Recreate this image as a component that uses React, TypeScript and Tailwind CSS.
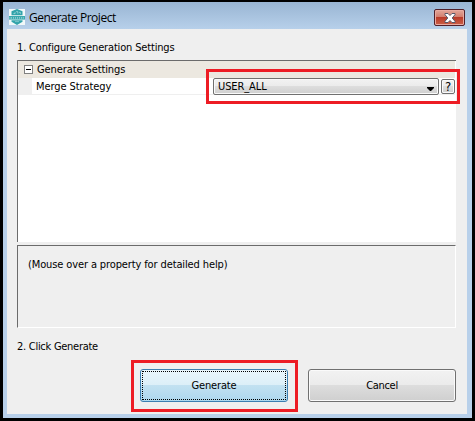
import React from "react";

const ui = "font-['DejaVu_Sans_Condensed','DejaVu_Sans',sans-serif] [font-stretch:condensed] text-[11px] leading-[16px] whitespace-nowrap text-black";

function AppIcon() {
  return (
    <svg width="16" height="16" viewBox="0 0 16 16" className="shrink-0">
      <rect width="16" height="16" fill="#f1f8f9" />
      <path d="M8 0 13.500 2.200v4H2.500v-4z" fill="#31a3aa" />
      <path d="M4.5 4.6h1.6V3.2M7.2 2.6h1.6v2M10 3.4h1.4v1.4" fill="none" stroke="#a8dadc" strokeWidth=".8" />
      <path d="M0 7h16v3.6H0z" fill="#3ba8ae" />
      <path d="M1 8v1.8M2.5 8v1.8M4.5 8v1.8M6.5 8v1.8M8.5 8v1.8M10.5 8v1.8M12.5 8v1.8M14.3 8v1.8" stroke="#a3d8da" strokeWidth=".7" />
      <path d="M2.5 11.2h11v1.600L8 16 2.500 12.800z" fill="#31a3aa" />
      <path d="M6 12.6h4" stroke="#8dced1" strokeWidth=".8" />
    </svg>
  );
}

function TitleBar() {
  return (
    <header className="flex h-[27px] items-start pl-[6px] pr-[7px] pt-[7px] bg-linear-to-b from-[#99b5d3] to-[#b7d0ea]">
      <AppIcon />
      <span className="ml-[4px] grow whitespace-nowrap font-['Open_Sans','Noto_Sans',sans-serif] text-[12px] leading-[17px] tracking-[-0.48px] text-black">
        Generate Project
      </span>
      <button className="flex h-[17px] w-[31px] items-center justify-center rounded-[2px] border border-[#51202a] bg-[linear-gradient(#e2a79a,#d27c6c_48%,#b93b29_50%,#cb6048)] shadow-[inset_0_0_0_1px_#e9aaa0]">
        <svg width="12" height="10" viewBox="0 0 12 10">
          <path d="M1 .5h3l2 2 2-2h3v1.2L8.2 5 11 8.300v1.200H8l-2-2-2 2H1V8.300L3.800 5 1 1.700z" fill="#fff" stroke="#56596b" />
        </svg>
      </button>
    </header>
  );
}

function SettingsTable() {
  return (
    <section className="mt-[4px] h-[182px] w-[439px] border-l border-t border-[#6b6b6b] bg-white">
      <div className="mr-[1px] flex h-[17px] items-center bg-[#ece8e0]">
        <svg width="9" height="9" className="ml-[6px] shrink-0">
          <rect x=".5" y=".5" width="8" height="8" fill="#fff" stroke="#808080" />
          <path d="M2 4.5h5" stroke="#000" />
        </svg>
        <span className={`${ui} ml-[4px] tracking-[-0.1px]`}>Generate Settings</span>
      </div>
      <div className="mr-[1px] flex h-[17px] border-b border-[#efefef]">
        <div className="h-[17px] w-[14px] shrink-0 bg-[#efefef]" />
        <span className={`${ui} ml-[4px] w-[177px] shrink-0 pt-[1px] tracking-[-0.08px]`}>Merge Strategy</span>
        <button className="flex h-[17px] w-[226px] shrink-0 items-center justify-between rounded-[2px] border border-[#707070] bg-[linear-gradient(#f2f2f2,#ebebeb_48%,#dddddd_50%,#cfcfcf)] pl-[4px] pr-[4px] shadow-[inset_0_0_0_1px_#fafafa]">
          <span className={`${ui} tracking-[-0.1px]`}>USER_ALL</span>
          <svg width="7" height="4" className="mt-[4px]"><path d="M0 0h7v1L4 4H3L0 1z" /></svg>
        </button>
        <button className={`${ui} ml-[2px] mt-[1px] flex h-[15px] w-[14px] shrink-0 items-center justify-center rounded-[2px] border border-[#707070] bg-[linear-gradient(#f2f2f2,#ebebeb_48%,#dddddd_50%,#cfcfcf)] shadow-[inset_0_0_0_1px_#fafafa]`}>
          <span className="text-[13px]">?</span>
        </button>
      </div>
    </section>
  );
}

export default function App() {
  return (
    <div className="relative h-[421px] w-[475px] overflow-hidden bg-black pl-[3px] pt-[2px]">
      <div className="h-[416px] w-[469px] bg-[#b8d0ea]">
        <TitleBar />
        <main className="ml-[4px] h-[385px] w-[460px] bg-[#efefef] pl-[10px] pt-[11px]">
          <p className={`${ui} tracking-[-0.16px]`}>1. Configure Generation Settings</p>
          <SettingsTable />
          <section className="mt-[3px] h-[83px] w-[439px] border border-b-white border-l-[#6b6b6b] border-r-white border-t-[#6b6b6b] pl-[10px] pt-[11px]">
            <p className={`${ui} tracking-[-0.12px]`}>(Mouse over a property for detailed help)</p>
          </section>
          <p className={`${ui} mt-[11px] tracking-[-0.27px]`}>2. Click Generate</p>
          <div className="ml-[123px] mt-[14px] flex gap-[20px]">
            <button className={`${ui} h-[33px] w-[148px] rounded-[3px] border border-[#3c7fb1] bg-[linear-gradient(#eaf6fc,#dceff8_48%,#c2e1f1_50%,#add8ee)] p-[1px] tracking-[-0.15px]`}>
              <span className="flex h-full items-center justify-center border border-dotted border-black">Generate</span>
            </button>
            <button className={`${ui} h-[33px] w-[148px] rounded-[3px] border border-[#707070] bg-[linear-gradient(#f2f2f2,#ebebeb_48%,#dddddd_50%,#cfcfcf)] tracking-[-0.3px] shadow-[inset_0_0_0_1px_#fafafa]`}>
              Cancel
            </button>
          </div>
        </main>
      </div>
      <div className="pointer-events-none absolute left-[206px] top-[69px] h-[35px] w-[254px] border-[3px] border-[#ed1c24]" />
      <div className="pointer-events-none absolute left-[131px] top-[360px] h-[52px] w-[167px] border-[3px] border-[#ed1c24]" />
    </div>
  );
}
